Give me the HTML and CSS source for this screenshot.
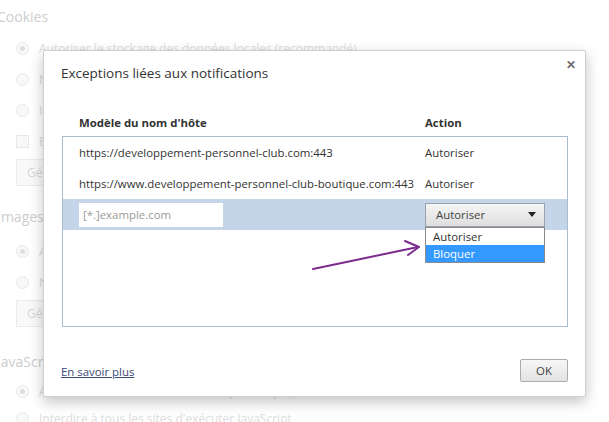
FILE: index.html
```html
<!DOCTYPE html>
<html lang="fr">
<head>
<meta charset="utf-8">
<title>Exceptions liées aux notifications</title>
<link rel="stylesheet" href="styles.css">
</head>
<body>
<div class="screen">
  <div class="settings">
    <h3 class="sec-title">Cookies</h3>
    <div class="opt"><span class="radio on"></span><span>Autoriser le stockage des données locales (recommandé)</span></div>
    <div class="opt"><span class="radio"></span><span>Ne conserver les données locales que jusqu'à ce que je quitte le navigateur</span></div>
    <div class="opt"><span class="radio"></span><span>Interdire à tous les sites de stocker des données</span></div>
    <div class="opt"><span class="check"></span><span>Bloquer les cookies et les données de site tiers</span></div>
    <div class="opt"><span class="btn-bg">Gérer les exceptions...</span></div>
    <h3 class="sec-title">Images</h3>
    <div class="opt"><span class="radio on"></span><span>Afficher toutes les images (recommandé)</span></div>
    <div class="opt"><span class="radio"></span><span>N'afficher aucune image</span></div>
    <div class="opt"><span class="btn-bg">Gérer les exceptions...</span></div>
    <h3 class="sec-title last">JavaScript</h3>
    <div class="opt tight"><span class="radio on"></span><span>Autoriser tous les sites à exécuter JavaScript (recommandé)</span></div>
    <div class="opt tight"><span class="radio"></span><span>Interdire à tous les sites d'exécuter JavaScript</span></div>
  </div>

  <div class="dialog">
    <div class="dlg-title">Exceptions liées aux notifications</div>
    <span class="close">&#x2715;</span>
    <div class="cols head">
      <span>Modèle du nom d'hôte</span>
      <span>Action</span>
    </div>
    <div class="list">
      <div class="cols row"><span>https://developpement-personnel-club.com:443</span><span>Autoriser</span></div>
      <div class="cols row"><span>https://www.developpement-personnel-club-boutique.com:443</span><span>Autoriser</span></div>
      <div class="cols row sel">
        <span class="input">[*.]example.com</span>
        <span class="select-wrap">
          <span class="select"><span>Autoriser</span><span class="caret"></span></span>
          <span class="menu">
            <span class="opt-item">Autoriser</span>
            <span class="opt-item hi">Bloquer</span>
          </span>
        </span>
      </div>
    </div>
    <div class="foot">
      <a class="link" href="#">En savoir plus</a>
      <span class="ok">OK</span>
    </div>
  </div>

  <svg class="arrow" width="130" height="50" viewBox="0 0 130 50">
    <path d="M13 39 L118 17" fill="none" stroke="#7d2b8c" stroke-width="2" stroke-linecap="round"/>
    <path d="M105 11 L119 17 L108 25" fill="none" stroke="#7d2b8c" stroke-width="2" stroke-linecap="round" stroke-linejoin="round"/>
  </svg>
</div>
</body>
</html>
```

FILE: styles.css
```css
* { box-sizing: border-box; }
html, body { margin: 0; padding: 0; background: #fff; }
body { font-family: "Open Sans", "Noto Sans", sans-serif; font-size: 11.4px; color: #333; }

.screen { position: relative; width: 609px; height: 422px; overflow: hidden; background: #fff; }

/* faded settings page behind the dialog */
.settings { padding: 6px 0 0 0; margin-left: -3px; color: #dcdcdc; }
.sec-title { margin: 18px 0 8px; font-weight: normal; font-size: 14px; line-height: 22px; height: 22px; color: #cdcdcd; }
.sec-title:first-child { margin: 0 0 5px; }
.sec-title.last { margin: 22px 0 5px; }
.opt { display: flex; align-items: center; gap: 10px; height: 31px; padding-left: 19px; font-size: 12px; white-space: nowrap; }
.opt.tight { height: 27px; }
.radio { width: 13px; height: 13px; border-radius: 50%; border: 1px solid #e8e8e8; background: #f8f8f8; position: relative; flex: none; }
.radio.on::after { content: ""; position: absolute; left: 3px; top: 3px; width: 5px; height: 5px; border-radius: 50%; background: #dedede; }
.check { width: 13px; height: 13px; border: 1px solid #e8e8e8; background: #f8f8f8; flex: none; }
.btn-bg { border: 1px solid #ebebeb; background: #f9f9f9; padding: 4px 10px; color: #d6d6d6; }

/* dialog */
.dialog {
  position: absolute; left: 43px; top: 50px; width: 543px; height: 347px;
  background: #fff; border: 1px solid #cfcfcf; border-radius: 2px;
  box-shadow: 0 5px 14px rgba(0,0,0,0.24);
  display: flex; flex-direction: column;
}
.dlg-title { padding: 13px 17px 0; font-size: 13.5px; line-height: 18px; color: #333; }
.close { position: absolute; right: 9px; top: 5px; font-size: 12px; font-weight: bold; color: #6f6f6f; }

.cols { display: grid; grid-template-columns: 346px 1fr; align-items: center; }
.head { margin-top: 33px; padding-left: 35px; font-weight: bold; line-height: 16px; color: #333; }
.list { margin: 5px 17px 0 18px; height: 191px; border: 1px solid #a9bccd; }
.row { height: 31px; padding-left: 16px; white-space: nowrap; color: #333; }
.row.sel { background: #c4d5ea; height: 31px; }

.input { width: 144px; height: 24px; background: #fff; color: #9a9a9a; padding-left: 4px; line-height: 24px; }
.select-wrap { position: relative; width: 120px; height: 24px; }
.select {
  display: flex; align-items: center; justify-content: space-between; height: 24px;
  border: 1px solid #9aa3ad; background: linear-gradient(#f5f5f5, #dedede);
  padding: 0 8px 0 10px; color: #444;
}
.caret { width: 0; height: 0; border-left: 4px solid transparent; border-right: 4px solid transparent; border-top: 5px solid #222; }
.menu {
  position: absolute; left: 0; top: 24px; width: 120px; background: #fff;
  border: 1px solid #8a8a8a; display: flex; flex-direction: column; z-index: 2;
}
.opt-item { height: 17px; line-height: 17px; padding-left: 7px; color: #333; }
.opt-item.hi { background: #3399ff; color: #fff; }

.foot { margin-top: auto; display: flex; justify-content: space-between; align-items: center; padding: 0 17px 14px 17px; }
.link { color: #3a4a78; text-decoration: underline; line-height: 16px; margin-top: 2px; }
.ok {
  width: 48px; height: 23px; border: 1px solid #acacac; border-radius: 2px;
  background: linear-gradient(#f7f7f7, #e2e2e2); color: #444;
  display: flex; align-items: center; justify-content: center;
}

.arrow { position: absolute; left: 300px; top: 230px; }
```
